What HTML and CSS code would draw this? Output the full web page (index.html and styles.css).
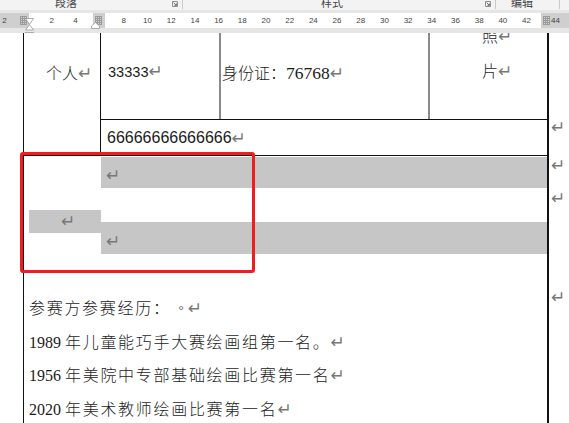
FILE: index.html
```html
<!DOCTYPE html>
<html lang="zh">
<head>
<meta charset="utf-8">
<title>Word 文档</title>
<link rel="stylesheet" href="styles.css">
</head>
<body>
<div class="ribbon">
  <span class="rlabel l1">段落</span>
  <span class="launch k1"><svg viewBox="0 0 6 6" width="6" height="6"><path d="M0.5 0.5H5.5V5.5H0.5Z" fill="none" stroke="#777" stroke-width="0.8"/><path d="M1.6 1.6L4.4 4.4M4.4 2.4V4.4H2.4" fill="none" stroke="#555" stroke-width="0.8"/></svg></span>
  <span class="rsep s1"></span>
  <span class="rlabel l2">样式</span>
  <span class="launch k2"><svg viewBox="0 0 6 6" width="6" height="6"><path d="M0.5 0.5H5.5V5.5H0.5Z" fill="none" stroke="#777" stroke-width="0.8"/><path d="M1.6 1.6L4.4 4.4M4.4 2.4V4.4H2.4" fill="none" stroke="#555" stroke-width="0.8"/></svg></span>
  <span class="rsep s2"></span>
  <span class="rlabel l3">编辑</span>
  <span class="rsep s3"></span>
</div>
<div class="rulerbar">
  <div class="ruler">
    <div class="rmargin rleft"><span class="num nl">2</span><span class="gmark gm1"></span></div>
    <div class="rwhite w1"><span class="num">2</span><span class="num">4</span></div>
    <div class="rcol"><span class="gmark"></span></div>
    <div class="rwhite w2">
      <span class="num">8</span><span class="num">10</span><span class="num">12</span><span class="num">14</span><span class="num">16</span><span class="num">18</span><span class="num">20</span><span class="num">22</span><span class="num">24</span><span class="num">26</span><span class="num">28</span><span class="num">30</span><span class="num">32</span><span class="num">34</span><span class="num">36</span><span class="num">38</span><span class="num">40</span><span class="num">42</span>
    </div>
    <div class="rmargin rright"><span class="gmark gm3"></span><span class="num n44">44</span></div>
  </div>
  <svg class="hourglass" viewBox="0 0 9 21" width="9" height="21"><path d="M0.5 0.5H8.5L4.5 6.5Z M4.5 6.5L0.5 12H8.5Z" fill="#fff" stroke="#999" stroke-width="0.8"/><rect x="0.5" y="14.5" width="8" height="6" fill="#fff" stroke="#999" stroke-width="0.8"/></svg>
  <svg class="tabmark" viewBox="0 0 9 7" width="9" height="7"><path d="M4.5 0.5L8.5 4V6.5H0.5V4Z" fill="#fff" stroke="#999" stroke-width="0.8"/></svg>
</div>
<div class="page">
  <div class="lgutter"></div>
  <div class="sheet">
    <div class="toprow">
      <div class="cell c1"><span class="cj">个人</span><span class="rm">↵</span></div>
      <div class="cell c2"><span class="d33">33333</span><span class="rm">↵</span></div>
      <div class="cell c3"><span class="cj">身份证：</span><span class="d76">76768</span><span class="rm">↵</span></div>
      <div class="cell c4">
        <div class="photo">
          <p class="pl"><span class="cj">照</span><span class="rm">↵</span></p>
          <p class="pl"><span class="cj">片</span><span class="rm">↵</span></p>
        </div>
      </div>
      <div class="cell c6"><span class="d66">66666666666666</span><span class="rm">↵</span></div>
    </div>
    <div class="midrow">
      <div class="mleft"><div class="sel small"><span class="rm">↵</span></div></div>
      <div class="mright">
        <div class="sel big b1"><span class="rm">↵</span></div>
        <div class="sel big b2"><span class="rm">↵</span></div>
      </div>
    </div>
    <div class="text">
      <p class="line"><span class="cj sp">参赛方参赛经历：</span><span class="deg">°</span> <span class="rm">↵</span></p>
      <p class="line"><span class="dg">1989</span> <span class="cj sp">年儿童能巧手大赛绘画组第一名。</span><span class="rm">↵</span></p>
      <p class="line"><span class="dg">1956</span> <span class="cj sp">年美院中专部基础绘画比赛第一名</span><span class="rm">↵</span></p>
      <p class="line"><span class="dg">2020</span> <span class="cj sp">年美术教师绘画比赛第一名</span><span class="rm">↵</span></p>
    </div>
  </div>
  <div class="rgutter">
    <span class="rm gm g1">↵</span>
    <span class="rm gm g2">↵</span>
    <span class="rm gm g3">↵</span>
    <span class="rm gm g4">↵</span>
  </div>
  <div class="redbox"></div>
</div>
</body>
</html>
```

FILE: styles.css
```css
* { box-sizing: border-box; }
html, body { margin: 0; padding: 0; }
body {
  width: 569px;
  height: 423px;
  overflow: hidden;
  background: #fff;
  font-family: "Liberation Serif", "Noto Sans CJK SC", serif;
  color: #1c1c1c;
}
p { margin: 0; }

/* ribbon group labels (clipped by the ruler, as in the reference) */
.ribbon {
  height: 10px;
  background: #f3f3f3;
  display: flex;
  align-items: flex-start;
  overflow: hidden;
}
.rlabel {
  font-family: "Noto Sans CJK SC", sans-serif;
  font-size: 11px;
  line-height: 12px;
  color: #444;
  margin-top: -4px;
  width: 22px;
  white-space: nowrap;
}
.l1 { margin-left: 55px; }
.launch { display: block; width: 6px; height: 6px; margin-top: 1px; }
.launch svg { display: block; }
.k1 { margin-left: 95px; }
.rsep { display: block; width: 1px; height: 9px; background: #c9c9c9; }
.s1 { margin-left: 4px; }
.l2 { margin-left: 138px; }
.k2 { margin-left: 142px; }
.s2 { margin-left: 4px; }
.l3 { margin-left: 15px; }
.s3 { margin-left: 26px; }

/* ruler */
.rulerbar {
  position: relative;
  background: #e6e6e6;
  padding: 3px 0 5px;
}
.ruler {
  height: 15px;
  display: flex;
  font-family: "Liberation Sans", sans-serif;
  font-size: 8px;
  color: #444;
}
.rmargin { background: #cfcfcf; display: flex; align-items: center; }
.rleft { width: 29px; }
.rright { width: 28px; }
.rwhite { background: #fff; display: flex; align-items: center; }
.w1 { width: 64px; padding-left: 11px; }
.w2 { width: 436px; padding-left: 7px; }
.rcol { width: 12px; background: #cfcfcf; display: flex; align-items: center; }
.num { display: block; width: 23.7px; text-align: center; line-height: 15px; }
.nl { width: 9px; }
.n44 { width: auto; margin-left: 1px; }
.gmark {
  display: block;
  width: 7px;
  height: 9px;
  margin-left: 2px;
  background:
    repeating-linear-gradient(90deg, #8a8a8a 0 1px, transparent 1px 2px),
    repeating-linear-gradient(0deg, #8a8a8a 0 1px, transparent 1px 2px);
  opacity: 0.75;
}
.gm1 { margin-left: 11px; }
.gm3 { margin-left: 2px; }
.hourglass { position: absolute; left: 25px; top: 8px; }
.tabmark { position: absolute; left: 91px; top: 12px; }

/* page */
.page {
  position: relative;
  height: 390px;
  display: flex;
  overflow: hidden;
  background: #fff;
}
.lgutter { width: 23px; flex: none; }
.sheet {
  width: 526px;
  flex: none;
  border-left: 1px solid #111;
  border-right: 2px solid #111;
}
.rgutter {
  flex: 1;
  display: flex;
  flex-direction: column;
  padding-left: 2px;
}

.rm {
  font-family: "DejaVu Sans", sans-serif;
  font-size: 17px;
  line-height: 14px;
  color: #777;
}
.cj {
  font-family: "Noto Sans CJK SC", sans-serif;
  font-weight: 300;
  font-size: 16px;
}

.toprow {
  display: grid;
  grid-template-columns: 76px 119px 209px 119px;
  grid-template-rows: 86px 36px;
}
.cell { line-height: 20px; white-space: nowrap; }
.c1 { grid-row: 1 / 3; padding: 29px 0 0 22px; }
.c2 { border-left: 1px solid #111; padding: 29px 0 0 7px; }
.c3 { border-left: 2px solid #8a8a8a; padding: 29px 0 0 1px; }
.c4 { border-left: 2px solid #8a8a8a; padding-left: 52px; }
.photo { margin-top: -15px; }
.pl { line-height: 35px; height: 35px; }
.c6 {
  grid-column: 2 / 5;
  border-left: 1px solid #111;
  border-top: 1px solid #111;
  padding-left: 6px;
  display: flex;
  align-items: center;
}
.d33 { font-family: "Liberation Sans", sans-serif; font-size: 14.6px; }
.d76 { font-size: 17.5px; }
.d66 { font-family: "Liberation Sans", sans-serif; font-size: 16px; }

.midrow {
  border-top: 1px solid #111;
  display: grid;
  grid-template-columns: 77px 1fr;
  height: 99px;
}
.sel { background: #c6c6c6; line-height: 14px; }
.small { margin: 54px 0 0 5px; height: 23px; padding: 4px 0 0 32px; }
.big { height: 31px; padding: 11px 0 0 5px; }
.b1 { margin-top: 1px; }
.b2 { margin-top: 34px; height: 32px; padding-top: 12px; }

.text { padding: 36px 0 0 5px; }
.line { height: 33.6px; line-height: 20px; padding-top: 7px; white-space: nowrap; }
.sp { letter-spacing: 1.7px; }
.dg { font-size: 16px; }
.deg { font-size: 13px; color: #555; margin-left: 8px; }

.gm { display: block; line-height: 12px; }
.g1 { margin-top: 88px; }
.g2 { margin-top: 26px; }
.g3 { margin-top: 21px; }
.g4 { margin-top: 87px; }

.redbox {
  position: absolute;
  left: 20px;
  top: 119px;
  width: 235px;
  height: 121px;
  border: 3px solid #f11d1d;
  border-radius: 3px;
}
```
